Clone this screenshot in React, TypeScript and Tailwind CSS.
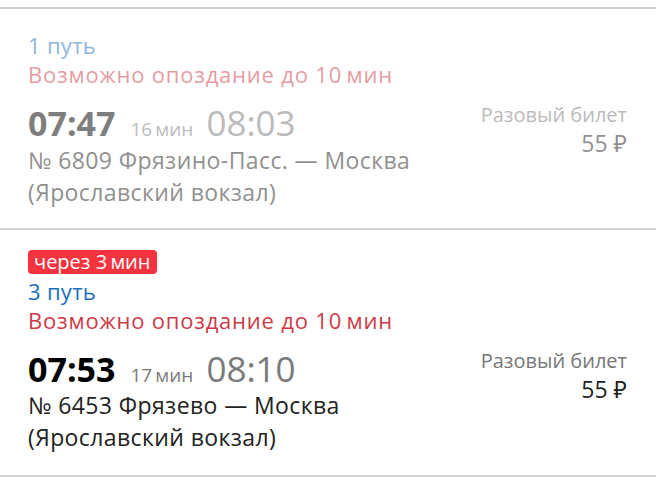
const FONT = { fontFamily: '"Open Sans", "Noto Sans", sans-serif' };

type Train = {
  badge?: string;
  track: string;
  delay: string;
  dep: string;
  dur: string;
  arr: string;
  route: string;
  station: string;
  price: string;
  past?: boolean;
};

const trains: Train[] = [
  {
    track: "1 путь",
    delay: "Возможно опоздание до 10\u2009мин",
    dep: "07:47",
    dur: "16\u2009мин",
    arr: "08:03",
    route: "№ 6809 Фрязино-Пасс. — Москва",
    station: "(Ярославский вокзал)",
    price: "55 ₽",
    past: true,
  },
  {
    badge: "через 3\u2009мин",
    track: "3 путь",
    delay: "Возможно опоздание до 10\u2009мин",
    dep: "07:53",
    dur: "17\u2009мин",
    arr: "08:10",
    route: "№ 6453 Фрязево — Москва",
    station: "(Ярославский вокзал)",
    price: "55 ₽",
  },
];

function TrainRow({ t }: { t: Train }) {
  return (
    <div className="border-b-2 border-[#d2d2d2] bg-white">
      <div className={`flex justify-between pl-[28px] pr-[29px] ${t.badge ? "pt-[20px] pb-[22px]" : "pt-[22px] pb-[20px]"} ${t.past ? "opacity-50" : ""}`}>
        <div className="flex flex-col">
          {t.badge && (
            <span className="mb-[3px] self-start rounded-[4px] bg-[#f5333f] px-[6px] text-[20px] leading-[24px] text-white">
              {t.badge}
            </span>
          )}
          <span className="text-[22px] leading-[29px] tracking-[0.3px] text-[#1a6fb8]">{t.track}</span>
          <span className="text-[22px] leading-[29px] tracking-[0.8px] text-[#cc3a47]">{t.delay}</span>
          <div className="mt-[14px] flex items-baseline">
            <span className="text-[34px] font-bold leading-[40px] text-black">{t.dep}</span>
            <span className="ml-[15px] text-[19px] text-[#7a7a7a]">{t.dur}</span>
            <span className="ml-[13px] text-[35px] leading-[40px] text-[#7a7a7a]">{t.arr}</span>
          </div>
          <span className="text-[23px] leading-[32px] tracking-[0.4px] text-[#222]">{t.route}</span>
          <span className="text-[23px] leading-[32px] tracking-[0.4px] text-[#222]">{t.station}</span>
        </div>
        <div className={`flex flex-col items-end ${t.badge ? "pt-[97px]" : "pt-[70px]"}`}>
          <span className="text-[20px] leading-[27px] text-[#777]">Разовый билет</span>
          <span className="text-[23px] leading-[30px] text-[#222]">{t.price}</span>
        </div>
      </div>
    </div>
  );
}

export default function App() {
  return (
    <div className="min-h-screen bg-white" style={FONT}>
      <div className="h-[7px] bg-white" />
      <div className="border-t-2 border-[#d2d2d2]">
        {trains.map((t) => (
          <TrainRow key={t.dep} t={t} />
        ))}
      </div>
    </div>
  );
}
